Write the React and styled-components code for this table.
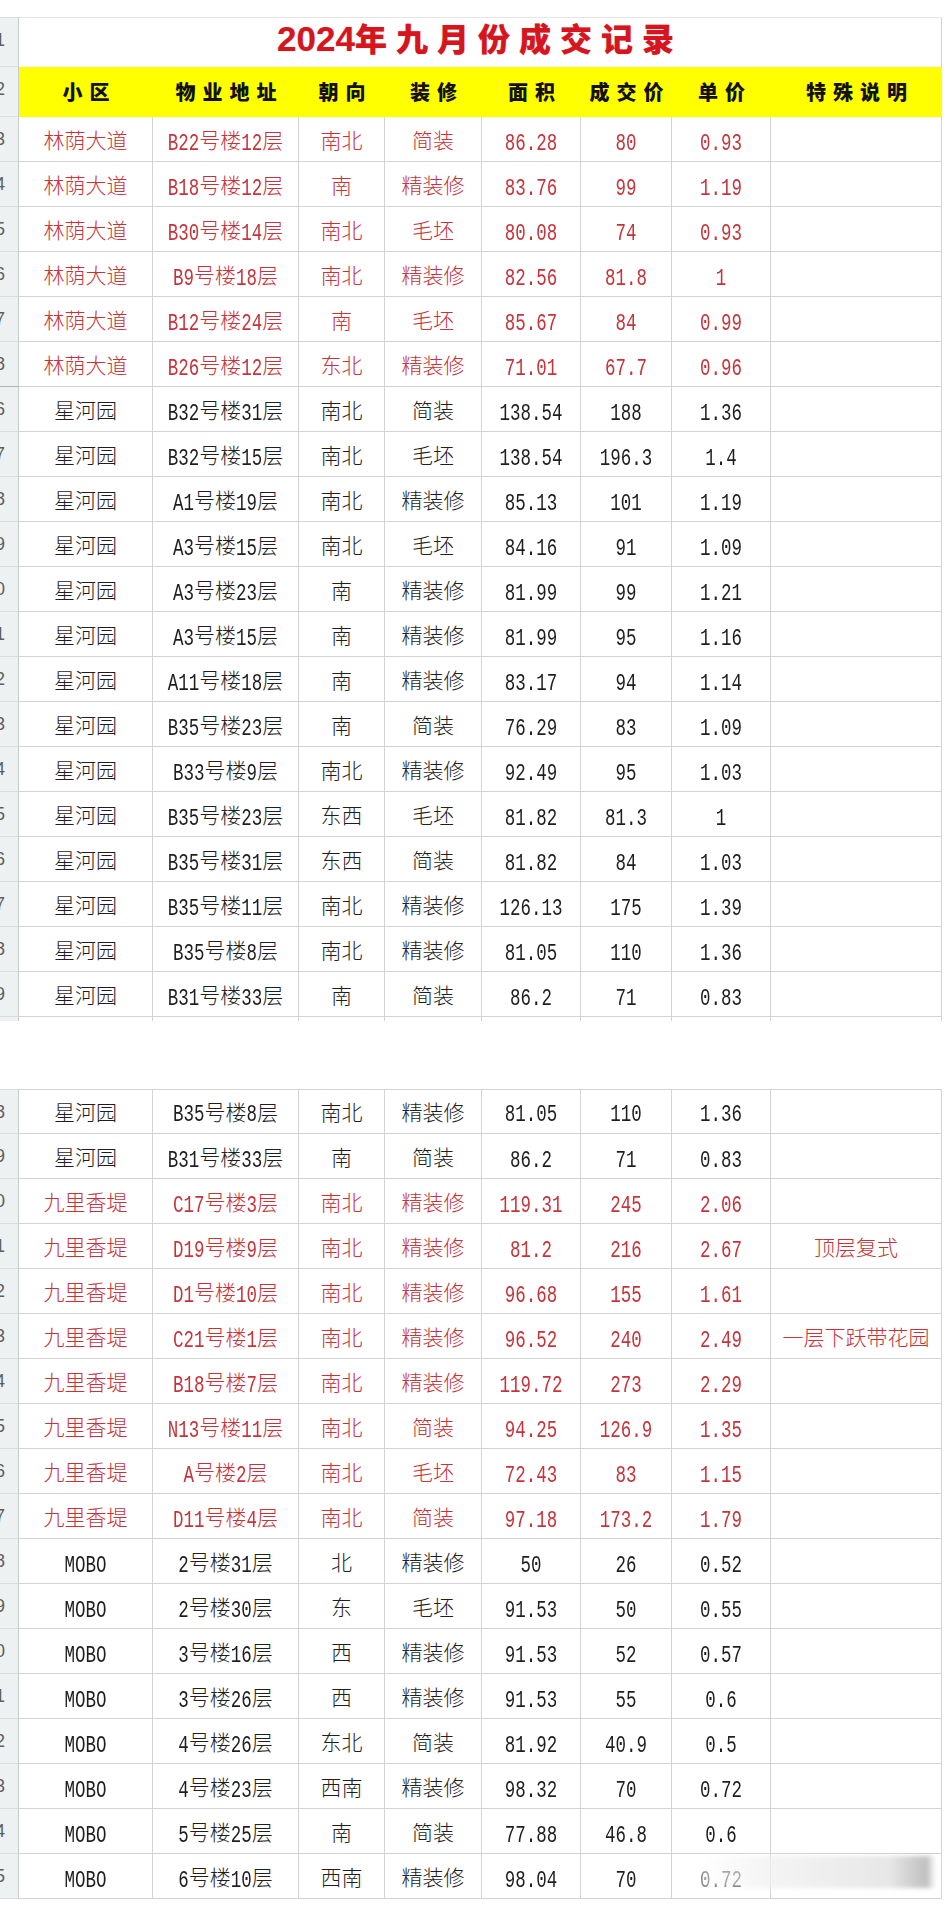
import React from 'react'
import styled, { createGlobalStyle } from 'styled-components'

const GlobalStyle = createGlobalStyle`
    body {
        margin: 0;
        background: #ffffff;
        font-family: "Noto Sans CJK SC", "Liberation Sans", sans-serif;
    }
`

const COLUMNS = '19px 134px 146px 86px 97px 99px 91px 99px 171px'
const RED = '#c7333a'
const LINE = '#d3d3d3'

const Page = styled.div`
    width: 950px;
    padding-top: 17px;
    padding-bottom: 7px;
`

const Block = styled.div`
    position: relative;
    display: grid;
    grid-template-columns: ${COLUMNS};
    width: 942px;
`

const Gap = styled.div`
    height: 68px;
`

// the sheet was cropped on the left: only the last digit of each row number shows
const RowNum = styled.div`
    display: flex;
    justify-content: flex-end;
    height: ${({ h }) => h || 45}px;
    box-sizing: border-box;
    background: #eef1f1;
    border-right: 1px solid #c9cccc;
    border-bottom: 1px solid ${({ thick }) => (thick ? '#b0b3b3' : '#dadddd')};
    border-top: ${({ top }) => (top ? '1px solid #dadddd' : 'none')};
    overflow: hidden;
    padding-right: 13px;
    font-family: "Liberation Sans", sans-serif;
    font-size: 18px;
    line-height: 44px;
    color: #5e5e5e;
    white-space: nowrap;
`

const TitleCell = styled.div`
    grid-column: span 8;
    height: 50px;
    box-sizing: border-box;
    border-top: 1px solid #e6e6e6;
    border-right: 1px solid ${LINE};
    text-align: center;
    line-height: 38px;
    color: #d6161f;
    font-size: 32px;
    font-weight: 900;
    text-shadow: 0 0 1px rgba(180, 0, 0, 0.4);
`

const TitleYear = styled.span`
    font-family: "Liberation Sans", sans-serif;
    font-weight: 700;
    font-size: 35px;
`

const TitleWords = styled.span`
    letter-spacing: 9px;
`

const HeadCell = styled.div`
    height: 50px;
    background: #ffff00;
    text-align: center;
    line-height: 50px;
    font-size: 20px;
    font-weight: 900;
    letter-spacing: 7px;
    text-indent: 7px;
    color: #111111;
`

const Cell = styled.div`
    height: 45px;
    box-sizing: border-box;
    border-right: 1px solid ${LINE};
    border-bottom: 1px solid ${LINE};
    border-top: ${({ top }) => (top ? `1px solid ${LINE}` : 'none')};
    text-align: center;
    line-height: ${({ top }) => (top ? 43 : 44)}px;
    font-size: 21px;
    font-weight: 300;
    white-space: nowrap;
    color: ${({ red }) => (red ? RED : '#1e1e1e')};
`

const StubCell = styled.div`
    height: 4px;
    box-sizing: border-box;
    border-right: 1px solid ${({ num }) => (num ? '#c9cccc' : LINE)};
    background: ${({ num }) => (num ? '#eef1f1' : 'transparent')};
`

const Latin = styled.span`
    display: inline-block;
    font-family: "Liberation Mono", monospace;
    font-size: 17.5px;
    transform: scaleY(1.32);
`

const Smear = styled.div`
    position: absolute;
    left: 700px;
    top: 767px;
    width: 236px;
    height: 32px;
    background: linear-gradient(
        to right,
        rgba(255, 255, 255, 0.55) 0%,
        rgba(240, 240, 240, 0.75) 30%,
        rgba(215, 215, 215, 0.6) 80%,
        rgba(140, 140, 140, 0.55) 96%,
        rgba(255, 255, 255, 0) 100%
    );
    filter: blur(2px);
`

const HEADERS = ['小区', '物业地址', '朝向', '装修', '面积', '成交价', '单价', '特殊说明']

const linYin = [
    ['B22号楼12层', '南北', '简装', '86.28', '80', '0.93'],
    ['B18号楼12层', '南', '精装修', '83.76', '99', '1.19'],
    ['B30号楼14层', '南北', '毛坯', '80.08', '74', '0.93'],
    ['B9号楼18层', '南北', '精装修', '82.56', '81.8', '1'],
    ['B12号楼24层', '南', '毛坯', '85.67', '84', '0.99'],
    ['B26号楼12层', '东北', '精装修', '71.01', '67.7', '0.96'],
].map((r) => ['林荫大道', ...r, ''])

const xingHe = [
    ['B32号楼31层', '南北', '简装', '138.54', '188', '1.36'],
    ['B32号楼15层', '南北', '毛坯', '138.54', '196.3', '1.4'],
    ['A1号楼19层', '南北', '精装修', '85.13', '101', '1.19'],
    ['A3号楼15层', '南北', '毛坯', '84.16', '91', '1.09'],
    ['A3号楼23层', '南', '精装修', '81.99', '99', '1.21'],
    ['A3号楼15层', '南', '精装修', '81.99', '95', '1.16'],
    ['A11号楼18层', '南', '精装修', '83.17', '94', '1.14'],
    ['B35号楼23层', '南', '简装', '76.29', '83', '1.09'],
    ['B33号楼9层', '南北', '精装修', '92.49', '95', '1.03'],
    ['B35号楼23层', '东西', '毛坯', '81.82', '81.3', '1'],
    ['B35号楼31层', '东西', '简装', '81.82', '84', '1.03'],
    ['B35号楼11层', '南北', '精装修', '126.13', '175', '1.39'],
    ['B35号楼8层', '南北', '精装修', '81.05', '110', '1.36'],
    ['B31号楼33层', '南', '简装', '86.2', '71', '0.83'],
].map((r) => ['星河园', ...r, ''])

const jiuLi = [
    ['C17号楼3层', '南北', '精装修', '119.31', '245', '2.06', ''],
    ['D19号楼9层', '南北', '精装修', '81.2', '216', '2.67', '顶层复式'],
    ['D1号楼10层', '南北', '精装修', '96.68', '155', '1.61', ''],
    ['C21号楼1层', '南北', '精装修', '96.52', '240', '2.49', '一层下跃带花园'],
    ['B18号楼7层', '南北', '精装修', '119.72', '273', '2.29', ''],
    ['N13号楼11层', '南北', '简装', '94.25', '126.9', '1.35', ''],
    ['A号楼2层', '南北', '毛坯', '72.43', '83', '1.15', ''],
    ['D11号楼4层', '南北', '简装', '97.18', '173.2', '1.79', ''],
].map((r) => ['九里香堤', ...r])

const mobo = [
    ['2号楼31层', '北', '精装修', '50', '26', '0.52'],
    ['2号楼30层', '东', '毛坯', '91.53', '50', '0.55'],
    ['3号楼16层', '西', '精装修', '91.53', '52', '0.57'],
    ['3号楼26层', '西', '精装修', '91.53', '55', '0.6'],
    ['4号楼26层', '东北', '简装', '81.92', '40.9', '0.5'],
    ['4号楼23层', '西南', '精装修', '98.32', '70', '0.72'],
    ['5号楼25层', '南', '简装', '77.88', '46.8', '0.6'],
    ['6号楼10层', '西南', '精装修', '98.04', '70', '0.72'],
].map((r) => ['MOBO', ...r, ''])

const firstBlock = [
    ...linYin.map((cells, i) => ({ num: 3 + i, cells, red: true })),
    ...xingHe.map((cells, i) => ({ num: 16 + i, cells, red: false })),
]

const secondBlock = [
    ...xingHe.slice(-2).map((cells, i) => ({ num: 28 + i, cells, red: false })),
    ...jiuLi.map((cells, i) => ({ num: 30 + i, cells, red: true })),
    ...mobo.map((cells, i) => ({ num: 38 + i, cells, red: false })),
]

// spreadsheet font: latin runs are half width, like a song-style cjk font
const mixed = (text) =>
    text
        .split(/([\x00-\x7f]+)/)
        .filter(Boolean)
        .map((part, i) => (/^[\x00-\x7f]+$/.test(part) ? <Latin key={i}>{part}</Latin> : part))

const DataRow = ({ row, top }) => (
    <>
        <RowNum top={top} thick={row.num === 8}>
            {row.num}
        </RowNum>
        {row.cells.map((text, i) => (
            <Cell key={i} red={row.red} top={top}>
                {mixed(text)}
            </Cell>
        ))}
    </>
)

export default function App() {
    return (
        <Page>
            <GlobalStyle />
            <Block>
                <RowNum h={50} top>
                    1
                </RowNum>
                <TitleCell>
                    <TitleYear>2024</TitleYear>
                    <TitleWords>年九月份成交记录</TitleWords>
                </TitleCell>
                <RowNum h={50}>2</RowNum>
                {HEADERS.map((h) => (
                    <HeadCell key={h}>{h}</HeadCell>
                ))}
                {firstBlock.map((row, i) => (
                    <DataRow key={i} row={row} />
                ))}
                <StubCell num />
                {HEADERS.map((h) => (
                    <StubCell key={h} />
                ))}
            </Block>
            <Gap />
            <Block>
                {secondBlock.map((row, i) => (
                    <DataRow key={i} row={row} top={i === 0} />
                ))}
                <Smear />
            </Block>
        </Page>
    )
}
